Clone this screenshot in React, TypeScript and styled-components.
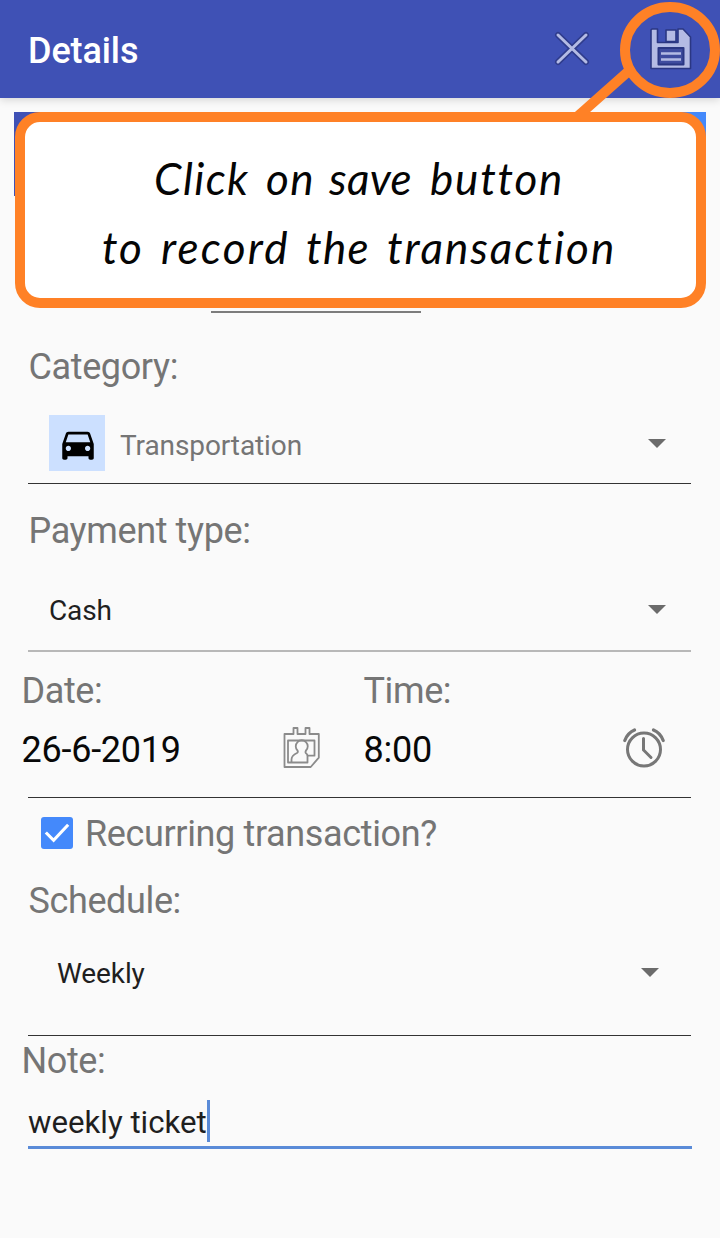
import React from 'react';
import styled, { createGlobalStyle } from 'styled-components';

const GlobalStyle = createGlobalStyle`
  * { box-sizing: border-box; }
  body {
    margin: 0;
    background: #fafafa;
    font-family: Roboto, sans-serif;
  }
`;

const Screen = styled.div`
  position: relative;
  width: 720px;
  height: 1238px;
  display: flex;
  flex-direction: column;
  overflow: hidden;
  background: #fafafa;
`;

const AppBar = styled.header`
  display: flex;
  align-items: center;
  flex: none;
  height: 98px;
  padding: 0 28px;
  background: #3f51b5;
  box-shadow: 0 2px 8px rgba(0, 0, 0, 0.15);
`;

const Title = styled.h1`
  flex: 1;
  margin: 0;
  padding-top: 4px;
  font-size: 36px;
  line-height: 42px;
  font-weight: 500;
  letter-spacing: -0.1px;
  color: #fff;
`;

const IconButton = styled.button<{ $gap?: number }>`
  display: flex;
  margin: 0 0 0 ${(p) => p.$gap ?? 0}px;
  padding: 0;
  border: 0;
  background: none;
`;

const AmountSection = styled.section`
  flex: none;
  height: 248px;
  padding: 14px 14px 0;
`;

const TypeTabs = styled.div`
  display: flex;
  height: 84px;
`;

const TypeTab = styled.div<{ $color: string }>`
  flex: 1;
  background: ${(p) => p.$color};
`;

const AmountField = styled.div`
  width: 210px;
  height: 117px;
  margin-left: 197px;
  border-bottom: 2px solid #7c7c7c;
`;

const Label = styled.div<{ $indent?: number; $top?: number }>`
  flex: none;
  height: 42px;
  margin-top: ${(p) => p.$top ?? 0}px;
  padding-left: ${(p) => p.$indent ?? 28.5}px;
  font-size: 36px;
  line-height: 42px;
  letter-spacing: -0.38px;
  color: #757575;
  white-space: nowrap;
`;

const Select = styled.div<{
  $height: number;
  $left: number;
  $right: number;
  $top: number;
  $muted?: boolean;
}>`
  display: flex;
  align-items: flex-start;
  flex: none;
  height: ${(p) => p.$height}px;
  margin: 0 29px 0 28px;
  padding: ${(p) => `${p.$top}px ${p.$right}px 0 ${p.$left}px`};
  font-size: 28px;
  line-height: 56px;
  letter-spacing: -0.1px;
  color: ${(p) => (p.$muted ? '#757575' : '#1f1f1f')};
`;

const SelectValue = styled.span<{ $drop?: number }>`
  flex: 1;
  padding-top: ${(p) => p.$drop ?? 2}px;
`;

const Arrow = styled.span`
  width: 0;
  height: 0;
  margin-top: 24px;
  border: 9px solid transparent;
  border-top-color: #6b6b6b;
  border-bottom-width: 0;
`;

const CategoryTile = styled.span`
  display: flex;
  align-items: center;
  justify-content: center;
  width: 56px;
  height: 56px;
  margin-right: 15px;
  padding: 1px 0 0 1px;
  background: #cce0ff;
`;

const Divider = styled.hr<{ $soft?: boolean }>`
  flex: none;
  width: 663px;
  height: ${(p) => (p.$soft ? 2 : 1)}px;
  margin: 0 0 0 28px;
  border: 0;
  background: ${(p) => (p.$soft ? '#b8b8b8' : '#333')};
`;

const DateTimeRow = styled.div`
  display: grid;
  grid-template-columns: 342px 342px;
  flex: none;
  height: 145px;
  padding: 18px 0 0 21.5px;
`;

const Picker = styled.div`
  display: flex;
  flex-direction: column;
`;

const PickerValue = styled.div<{ $right: number }>`
  display: flex;
  justify-content: space-between;
  height: 42px;
  margin-top: 17px;
  padding-right: ${(p) => p.$right}px;
  font-size: 36px;
  line-height: 42px;
  letter-spacing: -0.25px;
  color: #080808;
`;

const CheckRow = styled.label`
  display: flex;
  align-items: center;
  flex: none;
  height: 42px;
  margin-top: 15px;
  padding-left: 40px;
  font-size: 36px;
  line-height: 42px;
  letter-spacing: -0.36px;
  color: #757575;
`;

const CheckMark = styled.span`
  display: flex;
  width: 32px;
  height: 32px;
  margin: -2px 12px 0 1px;
  border-radius: 3px;
  background: #4489fb;
`;

const NoteInput = styled.div`
  display: flex;
  flex: none;
  width: 664px;
  height: 67px;
  margin-left: 28px;
  padding-top: 18px;
  border-bottom: 3px solid #5a8bd8;
  font-size: 31.2px;
  line-height: 46px;
  color: #1f1f1f;
`;

const Caret = styled.span`
  width: 3px;
  height: 42px;
  background: #5a8bd8;
`;

const Callout = styled.aside`
  position: absolute;
  left: 15px;
  top: 112px;
  width: 691px;
  height: 196px;
  padding-top: 22px;
  border: 10px solid #ff8126;
  border-radius: 25px;
  background: #fff;
`;

const CalloutLine = styled.div<{ $left: number }>`
  display: flex;
  height: 69px;
  padding-left: ${(p) => p.$left}px;
  font-family: 'Segoe Print', 'Ink Free', Lato, sans-serif;
  font-style: italic;
  font-size: 44px;
  line-height: 69px;
  font-variant-ligatures: none;
  color: #050505;
`;

const Word = styled.span<{ $width: number; $spacing: number }>`
  width: ${(p) => p.$width}px;
  letter-spacing: ${(p) => p.$spacing}px;
  white-space: nowrap;
`;

const Pointer = styled.svg`
  position: absolute;
  left: 560px;
  top: 0;
`;

const CloseIcon = () => (
  <svg width="36" height="36" viewBox="0 0 36 36" strokeLinecap="round">
    <path d="M4 4 32 31M32 4 4 31" stroke="#2f3c8c" strokeWidth="6" />
    <path d="M4 4 32 31M32 4 4 31" stroke="#b4bbe4" strokeWidth="3" />
  </svg>
);

const SaveIcon = () => (
  <svg width="44" height="44" viewBox="0 0 44 44" fill="none" strokeLinejoin="round">
    <g stroke="#2b3783" strokeWidth="1.6">
      <path
        d="M4 2h5.500V15.500H30V2h5L42.500 10V41.500H3V3Z"
        fill="#b4bbe4"
      />
      <path d="M18 3h10V14.500H18Z" fill="#b4bbe4" />
      <path d="M10.500 21h25v16.500H10.500Z" fill="#3f4c9f" strokeWidth="2" />
    </g>
    <path d="M13 26.500h20M13 32.500h20" stroke="#b4bbe4" strokeWidth="2.600" />
  </svg>
);

const CarIcon = () => (
  <svg width="42" height="42" viewBox="0 0 24 24">
    <path d="M18.92 6.010C18.720 5.420 18.160 5 17.500 5h-11c-.66 0-1.210.42-1.420 1.010L3 12v8c0 .55.45 1 1 1h1c.55 0 1-.45 1-1v-1h12v1c0 .55.45 1 1 1h1c.55 0 1-.45 1-1v-8l-2.080-5.990zM6.500 16c-.83 0-1.500-.67-1.500-1.500S5.670 13 6.500 13s1.500.67 1.500 1.500S7.330 16 6.500 16zm11 0c-.83 0-1.500-.67-1.500-1.500s.67-1.500 1.500-1.500 1.500.67 1.500 1.500-.67 1.500-1.500 1.500zM5 11l1.500-4.500h11L19 11H5z" />
  </svg>
);

const CalendarGlyph = styled.svg`
  margin-top: -3px;
`;

const CalendarIcon = () => (
  <CalendarGlyph
    width="38"
    height="44"
    viewBox="0 0 38 44"
    fill="none"
    stroke="#8b8b8b"
    strokeWidth="1.800"
    strokeLinejoin="round"
  >
    <path d="M1.500 8H10.500V2h4v6H22.500V2h4v6h9.300V31.700L27.700 41H1.500Z" />
    <path d="M24.500 36.500H5V14.500H31.500V29.700H24.500Z" />
    <path d="M8.500 36.500v-3q0-4 5.500-6.500q1.500-1 .5-2.500a6 6 0 1 1 8.500 0q-1 2 0 2.700q1.500 1 1.500 2.500" />
  </CalendarGlyph>
);

const AlarmGlyph = styled.svg`
  margin-top: -1px;
`;

const AlarmIcon = () => (
  <AlarmGlyph
    width="42"
    height="40"
    viewBox="0 0 42 40"
    fill="none"
    stroke="#777"
    strokeWidth="3"
    strokeLinecap="round"
  >
    <circle cx="21" cy="21.500" r="16.500" />
    <path d="M20.500 10.500V22l7.500 7.500" />
    <path d="M1.800 12.500Q4.500 5 11.500 2M30.500 2Q37.500 5 40.200 12.500" strokeWidth="3.200" />
  </AlarmGlyph>
);

export default function App() {
  return (
    <>
      <GlobalStyle />
      <Screen>
        <AppBar>
          <Title>Details</Title>
          <IconButton aria-label="Close">
            <CloseIcon />
          </IconButton>
          <IconButton aria-label="Save" $gap={58}>
            <SaveIcon />
          </IconButton>
        </AppBar>

        <AmountSection>
          <TypeTabs>
            <TypeTab $color="#3f51b5" />
            <TypeTab $color="#4489fb" />
          </TypeTabs>
          <AmountField />
        </AmountSection>

        <Label>Category:</Label>
        <Select $height={95} $left={21} $right={25} $top={27} $muted>
          <CategoryTile>
            <CarIcon />
          </CategoryTile>
          <SelectValue $drop={3}>Transportation</SelectValue>
          <Arrow />
        </Select>
        <Divider />

        <Label $top={26}>Payment type:</Label>
        <Select $height={98} $left={21} $right={25} $top={29}>
          <SelectValue>Cash</SelectValue>
          <Arrow />
        </Select>
        <Divider $soft />

        <DateTimeRow>
          <Picker>
            <Label $indent={0}>Date:</Label>
            <PickerValue $right={43}>
              26-6-2019
              <CalendarIcon />
            </PickerValue>
          </Picker>
          <Picker>
            <Label $indent={0}>Time:</Label>
            <PickerValue $right={41}>
              8:00
              <AlarmIcon />
            </PickerValue>
          </Picker>
        </DateTimeRow>
        <Divider />

        <CheckRow>
          <CheckMark>
            <svg width="32" height="32" viewBox="0 0 33 33" fill="none">
              <path d="m5 16 8 8L28 8" stroke="#fff" strokeWidth="3.200" />
            </svg>
          </CheckMark>
          Recurring transaction?
        </CheckRow>

        <Label $top={25}>Schedule:</Label>
        <Select $height={113} $left={29} $right={32} $top={22}>
          <SelectValue>Weekly</SelectValue>
          <Arrow />
        </Select>
        <Divider />

        <Label $indent={21.5} $top={4}>
          Note:
        </Label>
        <NoteInput>
          weekly ticket
          <Caret />
        </NoteInput>

        <Callout>
          <CalloutLine $left={129}>
            <Word $width={112} $spacing={1.4}>Click</Word>
            <Word $width={63} $spacing={1.5}>on</Word>
            <Word $width={101} $spacing={0.3}>save</Word>
            <Word $width={140} $spacing={1.8}>button</Word>
          </CalloutLine>
          <CalloutLine $left={77}>
            <Word $width={59} $spacing={2}>to</Word>
            <Word $width={145} $spacing={2.3}>record</Word>
            <Word $width={81} $spacing={1.3}>the</Word>
            <Word $width={240} $spacing={2}>transaction</Word>
          </CalloutLine>
        </Callout>
        <Pointer width="160" height="122" viewBox="0 0 160 122" fill="none" stroke="#ff8126" strokeWidth="10">
          <ellipse cx="110" cy="50" rx="45" ry="43" />
          <path d="M71 69 18 116" />
        </Pointer>
      </Screen>
    </>
  );
}
